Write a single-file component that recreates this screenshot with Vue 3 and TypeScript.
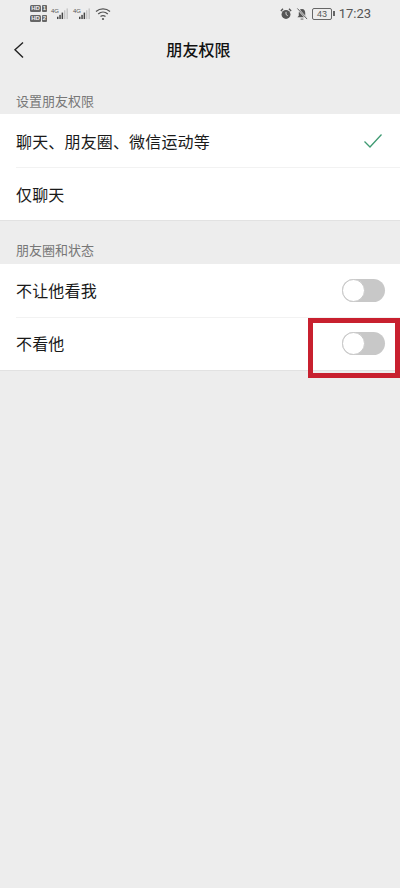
<script setup lang="ts">
interface Row { label: string; kind: 'check' | 'none' | 'toggle' }
const groups: { title: string; rows: Row[] }[] = [
  { title: '设置朋友权限', rows: [
    { label: '聊天、朋友圈、微信运动等', kind: 'check' },
    { label: '仅聊天', kind: 'none' },
  ] },
  { title: '朋友圈和状态', rows: [
    { label: '不让他看我', kind: 'toggle' },
    { label: '不看他', kind: 'toggle' },
  ] },
]
</script>

<template>
  <div class="page">
    <div class="status">
      <div class="status-left">
        <div class="sims">
          <div class="sim"><span class="hd">HD</span><span class="num">1</span></div>
          <div class="sim"><span class="hd">HD</span><span class="num">2</span></div>
        </div>
        <div v-for="n in 2" :key="n" class="signal">
          <span class="tag">4G</span>
          <svg width="13" height="13" viewBox="0 0 13 13">
            <rect x="0" y="10" width="1.6" height="2.5" fill="#444" />
            <rect x="2.5" y="8" width="1.6" height="4.5" fill="#444" />
            <rect x="5" y="5.5" width="1.6" height="7" fill="#444" />
            <rect x="7.8" y="3" width="1.2" height="9.5" fill="#bbb" />
            <rect x="10.4" y="1" width="1.2" height="11.5" fill="#bbb" />
          </svg>
        </div>
        <svg class="wifi" width="16" height="14" viewBox="0 0 16 14" fill="none" stroke="#555" stroke-width="1.3">
          <path d="M1 4.5C5 1 11 1 15 4.5" />
          <path d="M3.2 7C6 4.6 10 4.6 12.8 7" />
          <path d="M5.5 9.6C7 8.4 9 8.4 10.5 9.6" />
          <circle cx="8" cy="12" r="1.1" fill="#555" stroke="none" />
        </svg>
      </div>
      <div class="status-right">
        <svg width="12" height="14" viewBox="0 0 14 14">
          <circle cx="7" cy="7.5" r="5.2" fill="#555" />
          <path d="M1 3.5L3.5 1M13 3.5L10.5 1" stroke="#555" stroke-width="1.6" />
          <path d="M7 4.5V7.5L9 9" stroke="#eee" stroke-width="1" fill="none" />
        </svg>
        <svg width="12" height="14" viewBox="0 0 13 14">
          <path d="M6.5 1.5C4 1.5 3 3.5 3 6V9L1.5 10.5H11.5L10 9V6C10 3.5 9 1.5 6.5 1.5Z" fill="#555" />
          <path d="M5 12H8V13H5Z" fill="#555" />
          <path d="M1.5 1L12 12.5" stroke="#eee" stroke-width="2.2" />
          <path d="M1.5 1L12 12.5" stroke="#555" stroke-width="1" />
        </svg>
        <div class="battery"><span class="batt-body">43</span><span class="batt-tip"></span></div>
        <span class="time">17:23</span>
      </div>
    </div>

    <div class="nav">
      <svg class="back" width="12" height="18" viewBox="0 0 12 18" fill="none" stroke="#222" stroke-width="1.4">
        <path d="M10 1.5L2 8.8L10 16.5" />
      </svg>
      <span class="title">朋友权限</span>
    </div>

    <section v-for="g in groups" :key="g.title" class="group">
      <div class="group-title">{{ g.title }}</div>
      <div class="card">
        <div v-for="r in g.rows" :key="r.label" class="row">
          <span class="label">{{ r.label }}</span>
          <svg v-if="r.kind === 'check'" class="check" width="20" height="16" viewBox="0 0 20 16" fill="none" stroke="#3f9a72" stroke-width="1.3">
            <path d="M1.5 8.5L7 14L18.5 1.5" />
          </svg>
          <span v-else-if="r.kind === 'toggle'" class="toggle"><span class="knob"></span></span>
        </div>
      </div>
    </section>

    <div class="highlight"></div>
  </div>
</template>

<style>
html, body { margin: 0; background: #ededed; }
</style>

<style scoped>
.page {
  position: relative;
  width: 400px;
  height: 888px;
  overflow: hidden;
  background: #ededed;
  font-family: "Noto Sans CJK SC", "Liberation Sans", sans-serif;
  color: #1a1a1a;
}
.status {
  height: 26px;
  display: flex;
  justify-content: space-between;
  align-items: center;
  box-sizing: border-box;
  padding: 1px 29px 0 30px;
}
.status-left { display: flex; align-items: center; gap: 4px; }
.sims { display: flex; flex-direction: column; gap: 3px; }
.sim { display: flex; gap: 1px; }
.hd {
  width: 11px; height: 7px; border-radius: 1.5px; background: #666; color: #eee;
  font: 700 6px/7px "Liberation Sans", sans-serif; text-align: center;
}
.num {
  width: 5px; height: 7px; border-radius: 1px; background: #666; color: #eee;
  font: 700 6px/7px "Liberation Sans", sans-serif; text-align: center;
}
.signal { display: flex; align-items: flex-start; width: 18px; }
.signal:first-of-type { margin-left: 1px; }
.tag { font: 6px/8px "Liberation Sans", sans-serif; color: #555; width: 6px; flex: none; }
.status-right { display: flex; align-items: center; gap: 4px; }
.battery { display: flex; align-items: center; }
.batt-body {
  width: 18px; height: 10px; border: 1px solid #666; border-radius: 2px; color: #555;
  font: 9px/10px "Liberation Sans", sans-serif; text-align: center;
}
.batt-tip { width: 1.5px; height: 5px; background: #666; margin-left: 1px; }
.time { font: 13px/16px "Roboto", "Liberation Sans", sans-serif; color: #555; }
.nav {
  position: relative;
  height: 48px;
  display: flex;
  align-items: center;
  justify-content: center;
}
.back { position: absolute; left: 13px; top: 15px; }
.title { font-size: 16px; font-weight: 500; color: #111; margin: -2px 3px 0 0; letter-spacing: 0.1px; }
.group { display: flex; flex-direction: column; }
.group-title {
  height: 40px;
  box-sizing: border-box;
  padding: 18px 0 0 16px;
  font-size: 13px;
  line-height: 18px;
  color: #777;
}
.group + .group .group-title { padding-top: 20px; height: 43px; }
.group + .group .label { margin-top: -2px; }
.card { background: #fff; border-bottom: 1px solid #e2e2e2; }
.row {
  position: relative;
  height: 53px;
  display: flex;
  align-items: center;
  justify-content: space-between;
  padding: 0 15px 0 16px;
}
.row + .row::before {
  content: "";
  position: absolute;
  left: 16px;
  right: 0;
  top: 0;
  height: 1px;
  background: #f2f2f2;
}
.label { font-size: 16px; letter-spacing: 0.16px; color: #1a1a1a; }
.check { margin-right: 2px; }
.toggle {
  width: 43px;
  height: 23px;
  border-radius: 12px;
  background: #c8c8c8;
  display: flex;
  align-items: center;
}
.knob {
  width: 21px;
  height: 21px;
  border-radius: 50%;
  background: #fff;
  border: 1px solid #c8c8c8;
}
.highlight {
  position: absolute;
  left: 308px;
  top: 318px;
  width: 92px;
  height: 60px;
  box-sizing: border-box;
  border: 5px solid #c8202f;
}
</style>
